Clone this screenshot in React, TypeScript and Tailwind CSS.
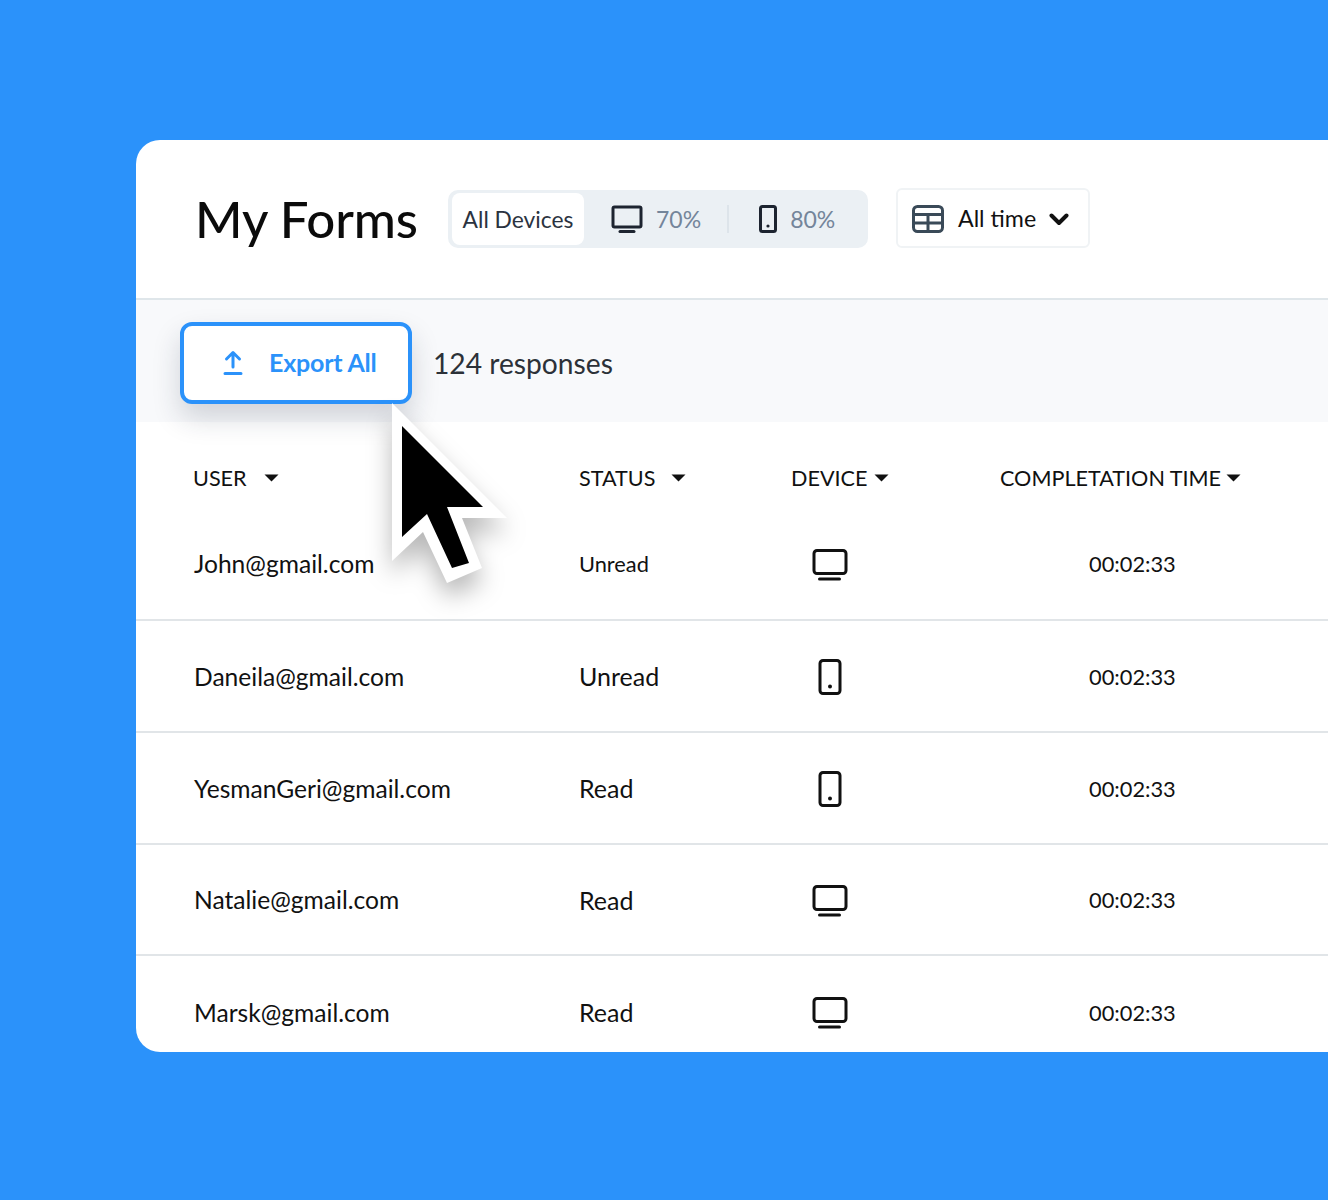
import React from "react";

const Desktop = () => (
  <svg width="36" height="32" viewBox="0 0 36 32" fill="none" stroke="#111" strokeWidth="3" strokeLinecap="round" strokeLinejoin="round">
    <rect x="2" y="1.5" width="32" height="23" rx="3" />
    <path d="M7.5 30h20" />
  </svg>
);
const Phone = () => (
  <svg width="24" height="36" viewBox="0 0 24 36" fill="none" stroke="#111" strokeWidth="3" strokeLinejoin="round">
    <rect x="2" y="1.5" width="20" height="33" rx="3" />
    <circle cx="12" cy="27.5" r="2" fill="#111" stroke="none" />
  </svg>
);
const Caret = () => (
  <svg width="15" height="8" viewBox="0 0 15 8" className="shrink-0"><path d="M0.5 0.5h14L7.5 7.5z" fill="#111" /></svg>
);

const rows = [
  { u: "John@gmail.com", s: "Unread", d: "desk", cls: "-mt-[26px] h-[113px] border-b-2 border-[#e1e5e8]", small: true },
  { u: "Daneila@gmail.com", s: "Unread", d: "phone", cls: "h-[112px] border-b-2 border-[#e1e5e8]" },
  { u: "YesmanGeri@gmail.com", s: "Read", d: "phone", cls: "h-[112px] border-b-2 border-[#e1e5e8]" },
  { u: "Natalie@gmail.com", s: "Read", d: "desk", cls: "h-[111px] border-b-2 border-[#e1e5e8]" },
  { u: "Marsk@gmail.com", s: "Read", d: "desk", cls: "h-[112px]" },
];

export default function App() {
  return (
    <div className="relative h-[1200px] w-[1328px] overflow-hidden bg-[#2b92fa] pl-[136px] pt-[140px] font-['Lato','Liberation_Sans',sans-serif] text-[#111]">
      <div className="h-[912px] w-[1192px] overflow-hidden rounded-l-[24px] bg-white">
        <header className="flex h-[160px] items-center border-b-2 border-[#dfe6ea] pl-[59px]">
          <h1 className="w-[253px] pb-[2px] text-[51px] leading-none font-medium tracking-[-0.1px] text-[#0b0b0b]">My Forms</h1>
          <div className="flex h-[58px] w-[420px] items-center rounded-[10px] bg-[#ebf0f4] pl-[4px]">
            <div className="flex h-[52px] w-[132px] items-center justify-center rounded-[8px] bg-white text-[22.8px] text-[#2b3340]">All Devices</div>
            <div className="ml-[27px] flex items-center gap-[13px] text-[23px] text-[#74859a]">
              <svg width="32" height="28" viewBox="0 0 32 28" fill="none" stroke="#1d2430" strokeWidth="3" strokeLinejoin="round" strokeLinecap="round">
                <rect x="2" y="2" width="28" height="20" rx="1.5" />
                <path d="M9 26.5h14" />
              </svg>
              <span>70%</span>
            </div>
            <div className="ml-[26px] h-[28px] w-[2px] bg-[#dde4ea]" />
            <div className="ml-[30px] flex items-center gap-[13px] text-[23px] text-[#74859a]">
              <svg width="18" height="28" viewBox="0 0 18 28" fill="none" stroke="#1d2430" strokeWidth="3" strokeLinejoin="round">
                <rect x="1.5" y="1.5" width="15" height="25" rx="2" />
                <circle cx="9" cy="21" r="1.6" fill="#1d2430" stroke="none" />
              </svg>
              <span>80%</span>
            </div>
          </div>
          <div className="ml-[28px] -mt-[2px] flex h-[60px] w-[194px] items-center rounded-[6px] border-2 border-[#f0f3f5] pl-[14px] pt-[1px]">
            <svg width="32" height="28" viewBox="0 0 32 28" fill="none" stroke="#3a4a58" strokeWidth="3" strokeLinejoin="round">
              <rect x="1.5" y="1.5" width="29" height="25" rx="4" />
              <path d="M1.5 9.5h29M1.5 18h29M16 9.5v17" />
            </svg>
            <span className="ml-[14px] text-[23.2px] text-[#111]">All time</span>
            <svg width="20" height="13" viewBox="0 0 20 13" fill="none" stroke="#111" strokeWidth="4" strokeLinecap="round" strokeLinejoin="round" className="ml-[13px] mt-[2px]"><path d="M2.5 2.5 10 10l7.5-7.5" /></svg>
          </div>
        </header>

        <div className="flex h-[122px] items-center bg-[#f8f9fb] pl-[44px] pt-[4px]">
          <button className="flex h-[82px] w-[232px] items-center rounded-[12px] border-[4px] border-[#2b92fa] bg-white pl-[39px] text-[25px] font-bold text-[#2b92fa] shadow-[0_14px_28px_rgba(30,40,60,0.18)]">
            <svg width="20" height="26" viewBox="0 0 20 26" fill="none" stroke="#2b92fa" strokeWidth="3" strokeLinecap="round" strokeLinejoin="round"><path d="M10 17V3M3.5 9 10 2.5 16.5 9M2 23.5h16" /></svg>
            <span className="ml-[26px] tracking-[-0.2px]">Export All</span>
          </button>
          <span className="ml-[21px] text-[28.2px] text-[#2c3138]">124 responses</span>
        </div>

        <div className="grid h-[112px] grid-cols-[386px_211px_210px_1fr] items-center pl-[57px] text-[21.6px]">
          <div className="flex items-center gap-[17px]"><span>USER</span><Caret /></div>
          <div className="flex items-center gap-[16px]"><span>STATUS</span><Caret /></div>
          <div className="flex items-center gap-[7px] pl-[1px]"><span>DEVICE</span><Caret /></div>
          <div className="flex items-center gap-[5px]"><span>COMPLETATION TIME</span><Caret /></div>
        </div>

        {rows.map((r) => (
          <div key={r.u} className={`grid grid-cols-[386px_211px_210px_1fr] items-center pl-[57px] pt-[2px] ${r.cls}`}>
            <div className="pl-[1px] text-[24.6px]">{r.u}</div>
            <div className={r.small ? "text-[21.8px]" : "text-[25px]"}>{r.s}</div>
            <div className="flex w-[80px] justify-center">{r.d === "desk" ? <Desktop /> : <Phone />}</div>
            <div className="pl-[89px] text-[21.8px]">00:02:33</div>
          </div>
        ))}
      </div>

      <svg width="140" height="200" viewBox="0 0 140 200" className="absolute left-[380px] top-[395px] drop-shadow-[0_14px_12px_rgba(0,0,0,0.28)]">
        <polygon points="12,8 127,123 82,123 102,173 67,188 43,137 12,166" fill="#fff" />
        <polygon points="22,31 103,112 67,112 89,168 72,173 47,119 22,142" fill="#000" />
      </svg>
    </div>
  );
}
